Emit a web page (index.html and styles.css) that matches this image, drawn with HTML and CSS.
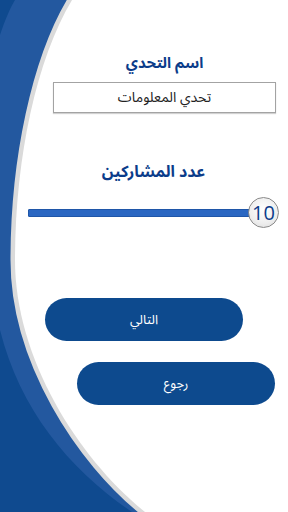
FILE: index.html
```html
<!DOCTYPE html>
<html lang="ar">
<head>
<meta charset="utf-8">
<link rel="stylesheet" href="styles.css">
</head>
<body>
<main class="screen">
  <svg class="bg" viewBox="0 0 288 512" width="288" height="512" aria-hidden="true">
    <rect x="0" y="0" width="288" height="512" fill="#0f4a8f"/>
    <path d="M15,0 L72,0 C36,60 15,160 15,260 C15,360 80,460 145,512 L132,512 C70,470 20,410 0,330 L0,35 C5,20 10,8 15,0 Z" fill="#23589f"/>
    <path d="M72,0 C36,60 15,160 15,260 C15,360 80,460 145,512" fill="none" stroke="#dadada" stroke-width="9"/>
    <path d="M72,0 C36,60 15,160 15,260 C15,360 80,460 145,512 L288,512 L288,0 Z" fill="#ffffff"/>
  </svg>

  <section class="field">
    <h2 class="label" dir="rtl">اسم التحدي</h2>
    <div class="textbox" dir="rtl">تحدي المعلومات</div>
  </section>

  <section class="count">
    <h2 class="label label-lg" dir="rtl">عدد المشاركين</h2>
    <div class="slider">
      <div class="track"></div>
      <div class="thumb">10</div>
    </div>
  </section>

  <div class="actions">
    <button class="btn btn-next" dir="rtl">التالي</button>
    <button class="btn btn-back" dir="rtl">رجوع</button>
  </div>
</main>
</body>
</html>
```
FILE: styles.css
```css
* { box-sizing: border-box; }
html, body { margin: 0; padding: 0; }
body {
  width: 288px;
  height: 512px;
  overflow: hidden;
  font-family: "Noto Sans Arabic", "Noto Naskh Arabic", "DejaVu Sans", sans-serif;
}
.screen {
  position: relative;
  width: 288px;
  height: 512px;
  overflow: hidden;
  display: flex;
  flex-direction: column;
  padding-top: 53px;
}
.bg {
  position: absolute;
  left: 0;
  top: 0;
  z-index: 0;
}
.field, .count, .actions { position: relative; z-index: 1; }

.field {
  padding: 0 12px 0 53px;
}
.label {
  margin: 0;
  text-align: center;
  color: #0b3c8a;
  font-size: 15px;
  line-height: 20px;
  font-weight: bold;
}
.textbox {
  margin-top: 9px;
  height: 31px;
  border: 1px solid #a3a3a3;
  box-shadow: 0 1px 1px rgba(0,0,0,0.18);
  background: #fff;
  text-align: center;
  font-size: 14px;
  line-height: 29px;
  color: #222;
}
.count {
  margin-top: 48px;
  padding: 0 9px 0 28px;
}
.label-lg {
  font-size: 16px;
  line-height: 23px;
}
.slider {
  margin-top: 13px;
  display: flex;
  align-items: center;
}
.track {
  flex: 1;
  height: 8px;
  background: #2a67c2;
  border: 1px solid #1f56a8;
  border-radius: 1px;
}
.thumb {
  width: 31px;
  height: 31px;
  margin-left: -2px;
  border-radius: 50%;
  border: 1.5px solid #8a8a8a;
  background: radial-gradient(circle at 50% 40%, #ffffff 0%, #eeeeee 60%, #d8d8d8 100%);
  display: flex;
  align-items: center;
  justify-content: center;
  font-family: "Open Sans", "DejaVu Sans", sans-serif;
  font-size: 20px;
  color: #0b3c8a;
}
.actions {
  margin-top: 70px;
  display: flex;
  flex-direction: column;
  gap: 21px;
}
.btn {
  width: 198px;
  height: 43px;
  border: none;
  border-radius: 22px;
  background: #0d4a8e;
  color: #fff;
  font-family: "Noto Sans Arabic", "Noto Naskh Arabic", "DejaVu Sans", sans-serif;
  font-size: 13px;
  padding: 0;
}
.btn-next { margin-left: 45px; }
.btn-back { margin-left: 77px; }
```
